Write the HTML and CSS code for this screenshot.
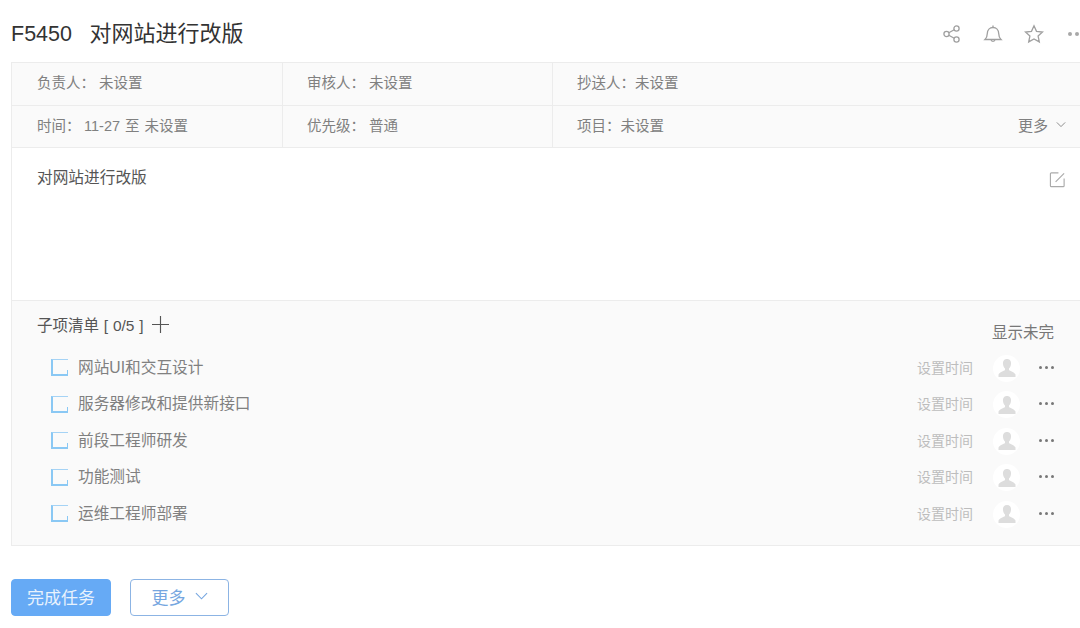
FILE: index.html
```html
<!DOCTYPE html>
<html lang="zh">
<head>
<meta charset="utf-8">
<title>F5450 对网站进行改版</title>
<link rel="stylesheet" href="styles.css">
</head>
<body>
<header class="top">
  <h1 class="title"><span class="code">F5450</span>对网站进行改版</h1>
  <div class="top-icons">
    <svg class="ti" viewBox="0 0 20 20"><circle cx="4.5" cy="10" r="2.6"/><circle cx="14.5" cy="4.5" r="2.6"/><circle cx="14.5" cy="15.5" r="2.6"/><path d="M6.8 8.7l5.4-3M6.8 11.3l5.4 3"/></svg>
    <svg class="ti" viewBox="0 0 20 20"><path d="M2 15.500h16c-1.600-1.400-2.200-3-2.300-6-.1-3.500-2.400-6-5.700-6S4.400 6 4.300 9.500c-.1 3-.7 4.600-2.300 6z"/><path d="M10 3.500V1.500M8 15.500c.2 2.400 3.800 2.400 4 0"/></svg>
    <svg class="ti" viewBox="0 0 20 20"><path d="M10 1.800l2.500 5.500 6 .7-4.400 4 1.200 5.900-5.300-3-5.300 3 1.200-5.900-4.400-4 6-.7z"/></svg>
    <span class="ti-more"><i></i><i></i></span>
  </div>
</header>

<main class="panel">
  <section class="meta">
    <div class="meta-row">
      <div class="cell"><span class="lbl">负责人：</span><span>未设置</span></div>
      <div class="cell"><span class="lbl">审核人：</span><span>未设置</span></div>
      <div class="cell cell-last"><span>抄送人：未设置</span></div>
    </div>
    <div class="meta-row">
      <div class="cell"><span class="lbl-s">时间：</span><span class="range">11-27 至 未设置</span></div>
      <div class="cell"><span class="lbl">优先级：</span><span>普通</span></div>
      <div class="cell cell-last"><span>项目：未设置</span>
        <span class="meta-more">更多<svg class="chev" viewBox="0 0 12 8"><path d="M1 1.500l5 5 5-5"/></svg></span>
      </div>
    </div>
  </section>

  <section class="desc">
    <p>对网站进行改版</p>
    <svg class="edit" viewBox="0 0 18 18"><path d="M10 2H2.500a1 1 0 0 0-1 1v12.500a1 1 0 0 0 1 1H15a1 1 0 0 0 1-1V8"/><path d="M7 11.500L16 2.500"/></svg>
  </section>

  <section class="sub">
    <div class="sub-head">
      <div class="sub-title">子项清单 [ 0/5 ]<svg class="plus" viewBox="0 0 18 18"><path d="M0 9h18M9 0v18"/></svg></div>
      <div class="sub-filter">显示未完</div>
    </div>
    <ul class="list">
      <li class="item"><span class="box"></span><span class="name">网站UI和交互设计</span><span class="when">设置时间</span><span class="avatar"><svg viewBox="0 0 20 20"><path d="M10 1c-3 0-4.300 2.200-4 5 .2 2 1 3.500 2 4.500v1.500c-1 1-5.500 2-6.500 4.500V19h17v-2.500c-1-2.500-5.500-3.500-6.500-4.500v-1.500c1-1 1.800-2.500 2-4.500.3-2.800-1-5-4-5z"/></svg></span><span class="dots"><i></i><i></i><i></i></span></li>
      <li class="item"><span class="box"></span><span class="name">服务器修改和提供新接口</span><span class="when">设置时间</span><span class="avatar"><svg viewBox="0 0 20 20"><path d="M10 1c-3 0-4.300 2.200-4 5 .2 2 1 3.500 2 4.500v1.500c-1 1-5.500 2-6.500 4.500V19h17v-2.500c-1-2.500-5.500-3.500-6.500-4.500v-1.500c1-1 1.800-2.500 2-4.500.3-2.800-1-5-4-5z"/></svg></span><span class="dots"><i></i><i></i><i></i></span></li>
      <li class="item"><span class="box"></span><span class="name">前段工程师研发</span><span class="when">设置时间</span><span class="avatar"><svg viewBox="0 0 20 20"><path d="M10 1c-3 0-4.300 2.200-4 5 .2 2 1 3.500 2 4.500v1.500c-1 1-5.500 2-6.500 4.500V19h17v-2.500c-1-2.500-5.500-3.500-6.500-4.500v-1.500c1-1 1.800-2.500 2-4.500.3-2.800-1-5-4-5z"/></svg></span><span class="dots"><i></i><i></i><i></i></span></li>
      <li class="item"><span class="box"></span><span class="name">功能测试</span><span class="when">设置时间</span><span class="avatar"><svg viewBox="0 0 20 20"><path d="M10 1c-3 0-4.300 2.200-4 5 .2 2 1 3.500 2 4.500v1.500c-1 1-5.500 2-6.500 4.500V19h17v-2.500c-1-2.500-5.500-3.500-6.500-4.500v-1.500c1-1 1.800-2.500 2-4.500.3-2.800-1-5-4-5z"/></svg></span><span class="dots"><i></i><i></i><i></i></span></li>
      <li class="item"><span class="box"></span><span class="name">运维工程师部署</span><span class="when">设置时间</span><span class="avatar"><svg viewBox="0 0 20 20"><path d="M10 1c-3 0-4.300 2.200-4 5 .2 2 1 3.500 2 4.500v1.500c-1 1-5.500 2-6.500 4.500V19h17v-2.500c-1-2.500-5.500-3.500-6.500-4.500v-1.500c1-1 1.800-2.500 2-4.500.3-2.800-1-5-4-5z"/></svg></span><span class="dots"><i></i><i></i><i></i></span></li>
    </ul>
  </section>
</main>

<footer class="actions">
  <button class="btn btn-primary">完成任务</button>
  <button class="btn btn-outline">更多<svg class="chev-btn" viewBox="0 0 14 8"><path d="M1 1l6 6 6-6"/></svg></button>
</footer>
</body>
</html>
```

FILE: styles.css
```css
* { box-sizing: border-box; }
html, body { margin: 0; padding: 0; }
body {
  width: 1080px;
  height: 628px;
  overflow: hidden;
  background: #fff;
  font-family: "Liberation Sans", "Noto Sans CJK SC", sans-serif;
  color: #808080;
  font-size: 14.500px;
}
.top {
  height: 62px;
  padding-left: 11px;
  display: flex;
  align-items: center;
  justify-content: space-between;
}
.title {
  margin: 0;
  font-size: 22px;
  font-weight: 400;
  color: #333;
}
.code { margin-right: 17.500px; font-size: 21.500px; }
.top-icons {
  display: flex;
  align-items: center;
  gap: 21px;
  width: 138px;
  padding-top: 5px;
}
.ti {
  width: 20px;
  height: 20px;
  fill: none;
  stroke: #a0a0a0;
  stroke-width: 1.300;
  flex: none;
}
.ti-more { display: flex; gap: 3px; margin-left: 3px; }
.ti-more i { width: 4px; height: 4px; border-radius: 50%; background: #a8a8a8; }
.panel {
  margin-left: 11px;
  border: 1px solid #ececec;
  border-right: 0;
}
.meta { background: #fafafa; }
.meta-row {
  display: grid;
  grid-template-columns: 271px 270px 1fr;
  height: 42.500px;
  border-bottom: 1px solid #ececec;
}
.cell {
  display: flex;
  align-items: center;
  padding-left: 24px;
  padding-bottom: 4px;
  border-right: 1px solid #ececec;
}
.cell:first-child { padding-left: 25px; }
.cell-last { border-right: 0; padding-right: 14px; justify-content: space-between; }
.lbl { width: 62px; }
.lbl-s { width: 47px; }
.range { word-spacing: 1px; }
.meta-more { display: flex; align-items: center; gap: 8px; font-size: 15px; }
.chev { width: 10px; height: 7px; fill: none; stroke: #777; stroke-width: 1; }
.desc {
  height: 153px;
  padding: 20px 14px 0 25px;
  display: flex;
  justify-content: space-between;
  background: #fff;
  border-bottom: 1px solid #ececec;
}
.desc p { margin: 0; color: #555; font-size: 15.700px; line-height: 20px; }
.edit { width: 17px; height: 17px; margin-top: 3px; fill: none; stroke: #aaa; stroke-width: 1.200; }
.sub { background: #fafafa; height: 243.500px; }
.sub-head {
  display: flex;
  justify-content: space-between;
  padding: 12px 26px 0 25px;
  height: 48px;
}
.sub-title {
  display: flex;
  align-items: center;
  height: 22px;
  color: #555;
  font-size: 15.500px;
  word-spacing: 0.500px;
}
.plus { width: 17px; height: 17px; margin-left: 8px; fill: none; stroke: #555; stroke-width: 1.200; }
.sub-filter { color: #777; font-size: 15.500px; padding-top: 7px; }
.list { list-style: none; margin: 0; padding: 0; }
.item {
  display: flex;
  align-items: center;
  height: 36.500px;
  padding-left: 39px;
  padding-right: 24px;
}
.box {
  width: 17px;
  height: 17px;
  margin-top: 1px;
  border-left: 2px solid #8ac8f4;
  border-bottom: 2px solid #8ac8f4;
  border-top: 1px solid #a5d3f5;
  position: relative;
  flex: none;
}
.box::after {
  content: "";
  position: absolute;
  right: 0;
  bottom: 0;
  width: 1px;
  height: 4px;
  background: #8ac8f4;
}
.name { margin-left: 10px; flex: 1; color: #808080; font-size: 15.700px; padding-bottom: 2px; }
.when { color: #bdbdbd; width: 57px; font-size: 14px; padding-bottom: 1px; }
.avatar {
  width: 27px;
  height: 27px;
  margin-left: 19px;
  margin-top: 2px;
  border-radius: 50%;
  background: #fff;
  display: flex;
  align-items: center;
  justify-content: center;
  flex: none;
}
.avatar svg { width: 20px; height: 20px; fill: #ddd; }
.dots { display: flex; gap: 3px; margin-left: 19px; width: 17px; flex: none; }
.dots i { width: 3px; height: 3px; border-radius: 50%; background: #777; flex: none; }
.actions {
  display: flex;
  gap: 19px;
  padding: 33px 0 0 11px;
}
.btn {
  height: 37px;
  border-radius: 4px;
  font-family: inherit;
  font-size: 17px;
  padding: 0 0 2px;
}
.btn-primary {
  width: 100px;
  background: #66aaf5;
  border: 1px solid #66aaf5;
  color: #e8f2fd;
}
.btn-outline {
  width: 99px;
  background: #fff;
  border: 1px solid #8cb4e4;
  color: #76a6e0;
  display: flex;
  align-items: center;
  justify-content: center;
  gap: 9px;
}
.chev-btn { width: 13px; height: 8px; fill: none; stroke: #76a6e0; stroke-width: 1.200; }
```
